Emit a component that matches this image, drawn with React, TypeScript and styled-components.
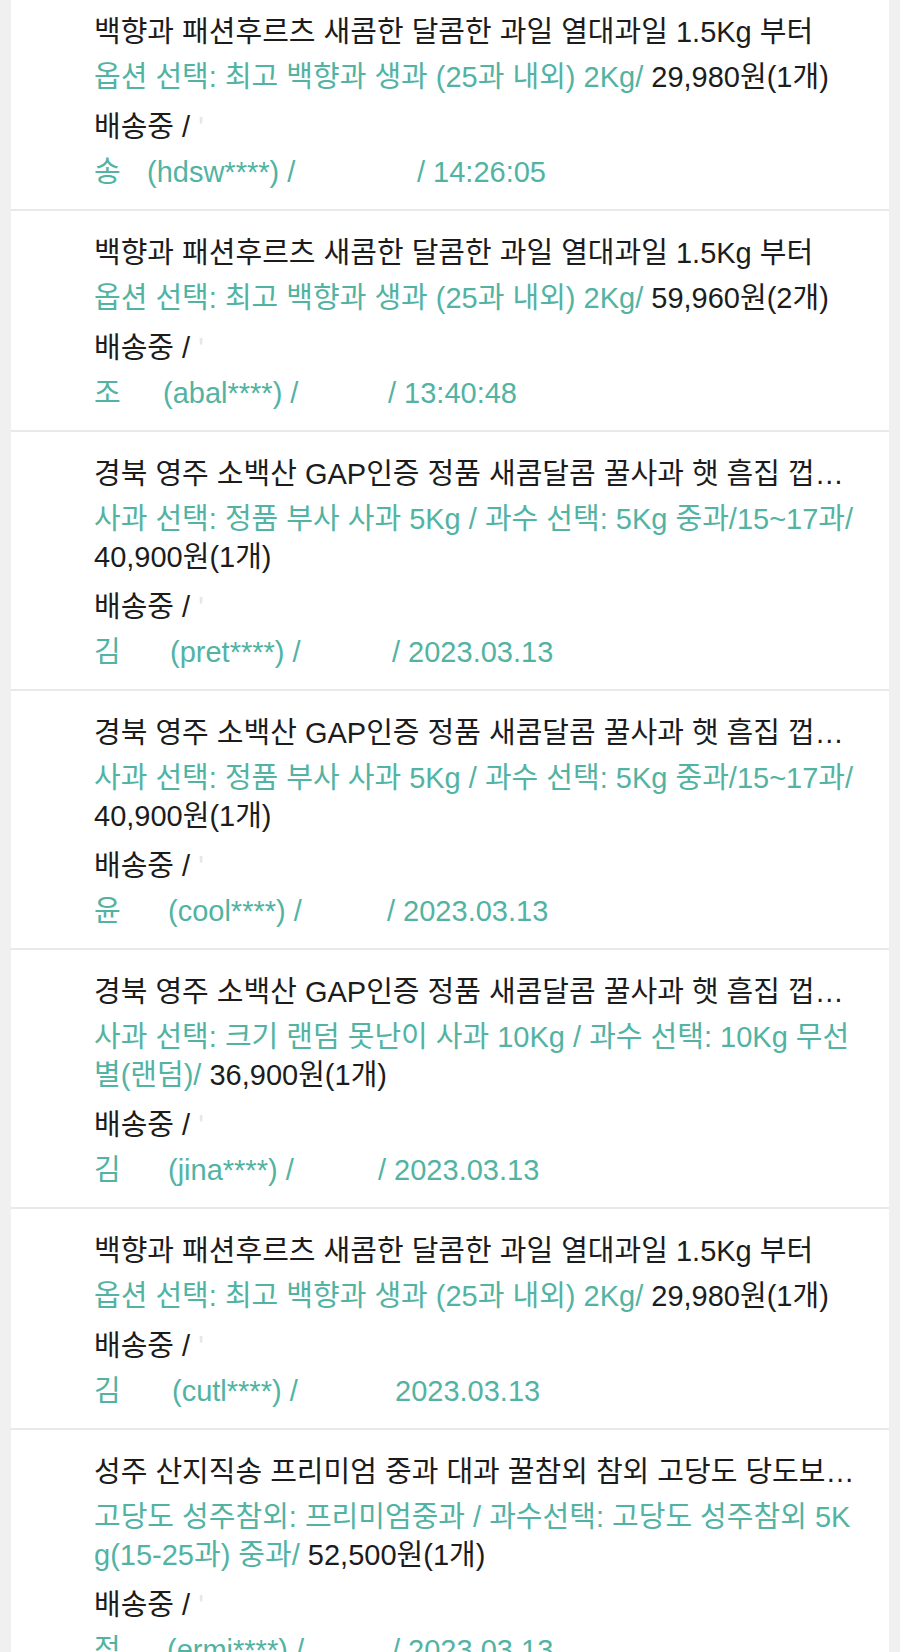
import React from "react";
import styled, { createGlobalStyle } from "styled-components";

const GlobalStyle = createGlobalStyle`
  html, body {
    margin: 0;
    padding: 0;
    background: #f0f0f0;
  }
  body {
    font-family: "Liberation Sans", "Noto Sans CJK KR", sans-serif;
    -webkit-font-smoothing: antialiased;
  }
`;

const Page = styled.div`
  height: 1652px;
  overflow: hidden;
  padding: 0 11px;
  background: #f0f0f0;
`;

const List = styled.ul`
  list-style: none;
  margin: -10px 0 0;
  padding: 0;
  background: #fff;
`;

const Row = styled.li`
  display: flex;
  flex-direction: column;
  gap: 7px;
  padding: 23px 27px 18px 83px;
  border-bottom: 2px solid #e9e9e9;
`;

const Line = styled.div`
  font-size: 29px;
  line-height: 38px;
  color: #1c1c1c;
`;

const Title = styled(Line)`
  white-space: nowrap;
  overflow: hidden;
  text-overflow: ellipsis;
`;

const Option = styled(Line)`
  color: #52b3a3;
  word-break: break-all;
`;

const Price = styled.span`
  color: #1c1c1c;
`;

const Status = styled(Line)`
  margin-top: 5px;
`;

const Buyer = styled(Line)`
  color: #52b3a3;
  white-space: nowrap;
`;

const Segment = styled.span<{ w: number }>`
  display: inline-block;
  width: ${({ w }) => w}px;
`;

const Faint = styled.span`
  color: #e6e6e6;
`;

interface Order {
  title: string;
  option: string;
  price: string;
  initial: string;
  id: string;
  time: string;
  lead: number;
  span: number;
}

const PASSION = "백향과 패션후르츠 새콤한 달콤한 과일 열대과일 1.5Kg 부터";
const PASSION_OPT = "옵션 선택: 최고 백향과 생과 (25과 내외) 2Kg/";
const APPLE = "경북 영주 소백산 GAP인증 정품 새콤달콤 꿀사과 햇 흠집 껍질째 먹는 사과";
const APPLE_OPT = "사과 선택: 정품 부사 사과 5Kg / 과수 선택: 5Kg 중과/15~17과/";

const orders: Order[] = [
  { title: PASSION, option: PASSION_OPT, price: "29,980원(1개)", initial: "송", id: "(hdsw****) /", time: "/ 14:26:05", lead: 53, span: 270 },
  { title: PASSION, option: PASSION_OPT, price: "59,960원(2개)", initial: "조", id: "(abal****) /", time: "/ 13:40:48", lead: 69, span: 225 },
  { title: APPLE, option: APPLE_OPT, price: "40,900원(1개)", initial: "김", id: "(pret****) /", time: "/ 2023.03.13", lead: 76, span: 222 },
  { title: APPLE, option: APPLE_OPT, price: "40,900원(1개)", initial: "윤", id: "(cool****) /", time: "/ 2023.03.13", lead: 74, span: 219 },
  { title: APPLE, option: "사과 선택: 크기 랜덤 못난이 사과 10Kg / 과수 선택: 10Kg 무선별(랜덤)/", price: "36,900원(1개)", initial: "김", id: "(jina****) /", time: "/ 2023.03.13", lead: 74, span: 210 },
  { title: PASSION, option: PASSION_OPT, price: "29,980원(1개)", initial: "김", id: "(cutl****) /", time: "2023.03.13", lead: 78, span: 223 },
  { title: "성주 산지직송 프리미엄 중과 대과 꿀참외 참외 고당도 당도보장 꿀맛 참외", option: "고당도 성주참외: 프리미엄중과 / 과수선택: 고당도 성주참외 5Kg(15-25과) 중과/", price: "52,500원(1개)", initial: "정", id: "(ermi****) /", time: "/ 2023.03.13", lead: 73, span: 225 },
];

export default function App() {
  return (
    <Page>
      <GlobalStyle />
      <List>
        {orders.map((o, i) => (
          <Row key={i}>
            <Title>{o.title}</Title>
            <Option>
              {o.option} <Price>{o.price}</Price>
            </Option>
            <Status>
              배송중 / <Faint>'</Faint>
            </Status>
            <Buyer>
              <Segment w={o.lead}>{o.initial}</Segment>
              <Segment w={o.span}>{o.id}</Segment>
              {o.time}
            </Buyer>
          </Row>
        ))}
      </List>
    </Page>
  );
}
